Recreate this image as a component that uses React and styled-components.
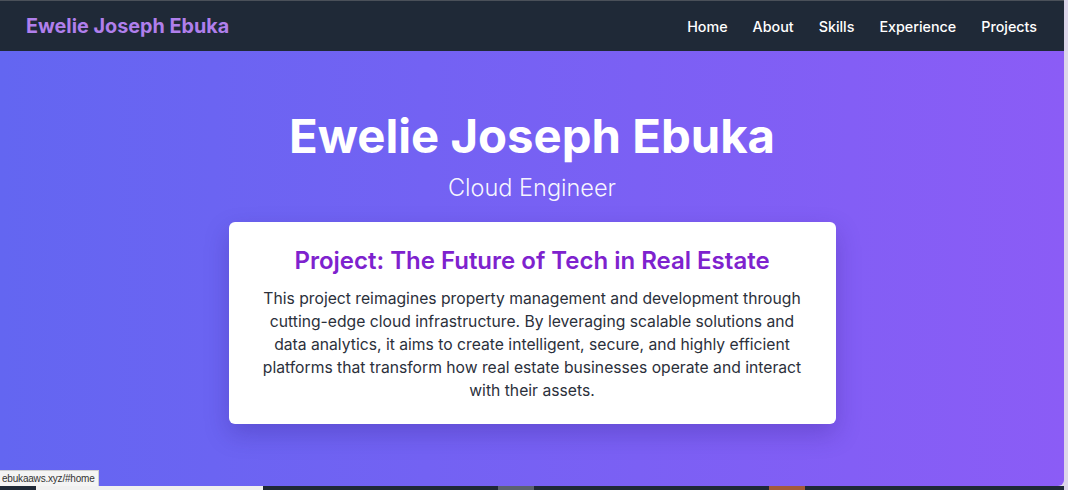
import React from "react";
import styled, { createGlobalStyle } from "styled-components";

const GlobalStyle = createGlobalStyle`
  html, body {
    margin: 0;
    padding: 0;
    height: 100%;
    overflow: hidden;
  }
  body {
    font-family: Inter, "Noto Sans", sans-serif;
    background: #ddd6ea;
  }
  * {
    box-sizing: border-box;
  }
`;

const links = ["Home", "About", "Skills", "Experience", "Projects"];

export default function App() {
  return (
    <>
      <GlobalStyle />
      <Frame>
        <Main>
          <Nav>
            <Logo>Ewelie Joseph Ebuka</Logo>
            <Links>
              {links.map((l) => (
                <NavLink key={l} href={`#${l.toLowerCase()}`}>
                  {l}
                </NavLink>
              ))}
            </Links>
          </Nav>
          <Hero id="home">
            <Title>Ewelie Joseph Ebuka</Title>
            <Subtitle>Cloud Engineer</Subtitle>
            <Card>
              <CardTitle>Project: The Future of Tech in Real Estate</CardTitle>
              <CardText>
                This project reimagines property management and development
                through cutting-edge cloud infrastructure. By leveraging
                scalable solutions and data analytics, it aims to create
                intelligent, secure, and highly efficient platforms that
                transform how real estate businesses operate and interact with
                their assets.
              </CardText>
            </Card>
          </Hero>
          <NextStrip>
            <StripLight />
            <StripBlock $left={235} $color="#5b6170" />
            <StripBlock $left={235} $color="#a35a3a" />
          </NextStrip>
        </Main>
        <ScrollEdge />
      </Frame>
      <StatusTip>ebukaaws.xyz/#home</StatusTip>
    </>
  );
}

const Frame = styled.div`
  display: flex;
  height: 490px;
`;

const Main = styled.div`
  flex: 1;
  display: flex;
  flex-direction: column;
  min-width: 0;
`;

const ScrollEdge = styled.div`
  width: 4px;
  background: #ddd6ea;
`;

const Nav = styled.nav`
  height: 51px;
  display: flex;
  align-items: center;
  justify-content: space-between;
  padding: 0 27px 0 26px;
  background: #1f2937;
  border-top: 1px solid #4a5059;
`;

const Logo = styled.div`
  font-size: 19.8px;
  font-weight: 700;
  color: #b07fec;
`;

const Links = styled.div`
  display: flex;
  gap: 25px;
`;

const NavLink = styled.a`
  font-size: 14.3px;
  font-weight: 500;
  color: #ffffff;
  text-decoration: none;
`;

const Hero = styled.section`
  height: 435px;
  display: flex;
  flex-direction: column;
  align-items: center;
  padding-top: 57px;
  background: linear-gradient(to right, #6366f1, #8b5cf6);
  border-bottom-right-radius: 6px;
`;

const Title = styled.h1`
  margin: 0;
  font-size: 47.3px;
  line-height: 56px;
  font-weight: 700;
  color: #ffffff;
`;

const Subtitle = styled.p`
  margin: 9px 0 0;
  font-size: 23.5px;
  line-height: 30px;
  font-weight: 300;
  color: rgba(255, 255, 255, 0.95);
`;

const Card = styled.div`
  width: 607px;
  margin-top: 19px;
  padding: 23px 30px 22px;
  background: #ffffff;
  border-radius: 6px;
  box-shadow: 0 10px 25px rgba(40, 20, 120, 0.25);
  text-align: center;
`;

const CardTitle = styled.h2`
  margin: 0;
  font-size: 24px;
  line-height: 32px;
  font-weight: 600;
  color: #7e22ce;
`;

const CardText = styled.p`
  margin: 10px 0 0;
  font-size: 15.7px;
  line-height: 23px;
  color: #2b303b;
`;

const NextStrip = styled.div`
  height: 4px;
  background: #1f2937;
  display: flex;
`;

const StripLight = styled.div`
  width: 227px;
  margin-left: 36px;
  background: #f0f0f0;
`;

const StripBlock = styled.div`
  width: 36px;
  margin-left: ${(p) => p.$left}px;
  background: ${(p) => p.$color};
`;

const StatusTip = styled.div`
  position: fixed;
  left: 0;
  bottom: 4px;
  padding: 2px 3px 2px 2px;
  font-family: "Liberation Sans", Arial, sans-serif;
  font-size: 10px;
  letter-spacing: -0.2px;
  color: #333333;
  background: #f4f4f4;
  border: 1px solid #cfcfcf;
  border-left: none;
  border-bottom: none;
`;
